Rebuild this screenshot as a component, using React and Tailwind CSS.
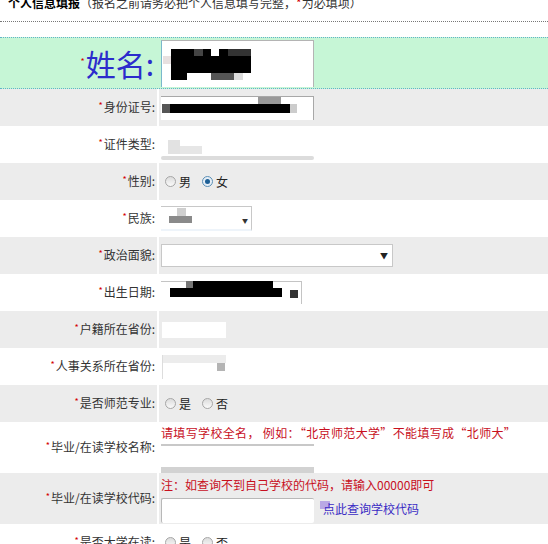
import React from 'react';

const FONT = { fontFamily: '"Noto Sans CJK SC", "Liberation Sans", sans-serif' };

const Star = () => <span className="relative -top-[3px] mr-[1px] text-[9px] text-[#d40000]">*</span>;

const Label = ({ children }) => (
  <span className="text-[12px] leading-[14px] text-[#333]">
    <Star />
    {children}:
  </span>
);

const Radio = ({ checked }) =>
  checked ? (
    <span className="flex h-[11px] w-[11px] items-center justify-center rounded-full border border-[#5b8fb5] bg-[#e6eef6]">
      <span className="h-[5px] w-[5px] rounded-full bg-[#1d5f96]" />
    </span>
  ) : (
    <span className="h-[11px] w-[11px] rounded-full border border-[#a6a6a6] bg-gradient-to-b from-[#dcdcdc] to-[#fafafa]" />
  );

const RadioPair = ({ a, b, checked }) => (
  <div className="flex items-center pl-[6px] text-[12px] text-[#222]">
    <Radio checked={checked === 'a'} />
    <span className="ml-[3px] mr-[11px]">{a}</span>
    <Radio checked={checked === 'b'} />
    <span className="ml-[3px]">{b}</span>
  </div>
);

// one table row: label cell + content cell, 2px white spacing between
const Row = ({ label, grey, tall, children }) => (
  <div className={`flex gap-[2px] ${tall ? 'h-[51px]' : 'h-[37px]'}`}>
    <div className={`flex w-[157px] shrink-0 items-center justify-end pr-[2px] ${grey ? 'bg-[#ececec]' : 'bg-white'}`}>
      <Label>{label}</Label>
    </div>
    <div className={`flex flex-1 items-center ${grey ? 'bg-[#ececec]' : 'bg-white'}`}>{children}</div>
  </div>
);

const Blk = ({ className }) => <span className={`absolute ${className}`} />;

export default function App() {
  return (
    <div className="w-[548px] overflow-hidden bg-white" style={FONT}>
      <div className="-mt-[4px] h-[25px] pl-[8px] text-[12px] leading-[14px] text-[#333]">
        <b className="text-black">个人信息填报</b>（报名之前请务必把个人信息填写完整，<span className="text-[#d40000]">*</span>为必填项）
      </div>
      <div className="border-t border-dotted border-[#777]" />
      <div className="h-[15px]" />

      {/* 姓名 */}
      <div className="flex h-[52px] border-y border-dotted border-[#62b4c8] bg-[#c6f6d6]">
        <div className="flex w-[159px] shrink-0 items-center justify-end pr-[5px]">
          <span className="relative -top-[1px] mr-[1px] text-[9px] text-[#d40000]">*</span>
          <span className="text-[30px] leading-[34px] text-[#2c2ccc]">姓名:</span>
        </div>
        <div className="flex flex-1 items-center">
          <div className="relative ml-[2px] h-[47px] w-[153px] border-t border-r border-[#b4b4b4] border-l border-l-[#7ab8cc] border-l-dotted bg-white">
            <Blk className="left-[9px] top-[8px] h-[7px] w-[23px] bg-black" />
            <Blk className="left-[32px] top-[8px] h-[7px] w-[9px] bg-[#444]" />
            <Blk className="left-[41px] top-[8px] h-[7px] w-[8px] bg-black" />
            <Blk className="left-[57px] top-[8px] h-[7px] w-[9px] bg-black" />
            <Blk className="left-[66px] top-[8px] h-[7px] w-[23px] bg-[#333]" />
            <Blk className="left-[9px] top-[15px] h-[17px] w-[80px] bg-black" />
            <Blk className="left-[1px] top-[15px] h-[8px] w-[8px] bg-[#e8e0e0]" />
            <Blk className="left-[9px] top-[32px] h-[7px] w-[16px] bg-black" />
            <Blk className="left-[49px] top-[32px] h-[7px] w-[23px] bg-[#555]" />
            <Blk className="left-[72px] top-[32px] h-[7px] w-[9px] bg-[#ddd]" />
          </div>
        </div>
      </div>

      <Row label="身份证号" grey>
        <div className="relative ml-[2px] h-[24px] w-[153px] border-t border-r border-[#a8a8a8] bg-white">
          <Blk className="left-[1px] top-[7px] h-[9px] w-[8px] bg-[#555]" />
          <Blk className="left-[9px] top-[7px] h-[9px] w-[120px] bg-black" />
          <Blk className="left-[129px] top-[7px] h-[9px] w-[7px] bg-[#ccc]" />
          <Blk className="left-[97px] top-0 h-[7px] w-[23px] bg-[#999]" />
        </div>
      </Row>

      <Row label="证件类型">
        <div className="relative ml-[2px] h-[30px] w-[153px]">
          <Blk className="left-[7px] top-[10px] h-[14px] w-[12px] bg-[#e2e2e2]" />
          <Blk className="left-[19px] top-[16px] h-[8px] w-[22px] bg-[#e6e6e6]" />
          <Blk className="left-0 top-[26px] h-[4px] w-[153px] rounded-full bg-[#dcdcdc]" />
        </div>
      </Row>

      <Row label="性别" grey>
        <RadioPair a="男" b="女" checked="b" />
      </Row>

      <Row label="民族">
        <div className="relative ml-[2px] h-[25px] w-[91px] border-r border-t border-[#c8c8c8] border-b-[2px] border-b-[#eef4fa] bg-white">
          <Blk className="left-[8px] top-[9px] h-[7px] w-[23px] bg-[#8a8a8a]" />
          <Blk className="left-[16px] top-[1px] h-[8px] w-[9px] bg-[#cfcfcf]" />
          <span className="absolute right-[3px] top-[11px] text-[6px] leading-[6px] text-[#333]">▼</span>
        </div>
      </Row>

      <Row label="政治面貌" grey>
        <div className="relative ml-[2px] h-[23px] w-[232px] border border-[#c8c8c8] bg-white">
          <span className="absolute right-[4px] top-[7px] text-[8px] leading-[8px] text-[#222]">▼</span>
        </div>
      </Row>

      <Row label="出生日期">
        <div className="relative ml-[2px] h-[23px] w-[141px] border-t border-r border-[#c4c4c4] bg-white">
          <Blk className="left-[32px] top-[-1px] h-[7px] w-[80px] bg-black" />
          <Blk className="left-[25px] top-[-1px] h-[7px] w-[7px] bg-[#777]" />
          <Blk className="left-[9px] top-[6px] h-[9px] w-[112px] bg-black" />
          <Blk className="left-[129px] top-[8px] h-[8px] w-[8px] bg-[#333]" />
        </div>
      </Row>

      <Row label="户籍所在省份" grey>
        <div className="ml-[3px] h-[16px] w-[64px] bg-white" />
      </Row>

      <Row label="人事关系所在省份">
        <div className="relative ml-[3px] h-[24px] w-[63px] border-l border-[#ddd] bg-white">
          <Blk className="left-0 top-0 h-[8px] w-[63px] bg-[#ececec]" />
          <Blk className="right-0 top-[8px] h-[8px] w-[8px] bg-[#b4b4b4]" />
        </div>
      </Row>

      <Row label="是否师范专业" grey>
        <RadioPair a="是" b="否" />
      </Row>

      <Row label="毕业/在读学校名称" tall>
        <div className="flex h-full flex-col pl-[2px] pt-[4px]">
          <span className="text-[12px] leading-[14px] tracking-[0.35px] text-[#c8101e]">请填写学校全名， 例如：“北京师范大学”不能填写成“北师大”</span>
          <div className="mt-[4px] h-[27px] w-[153px] border-t-[2px] border-[#c8c8c8] bg-white" />
          <div className="h-[7px] w-[153px] bg-[#d2d2d2]" />
        </div>
      </Row>

      <Row label="毕业/在读学校代码" grey tall>
        <div className="flex h-full flex-col pl-[2px] pt-[5px]">
          <span className="text-[12px] leading-[14px] text-[#c8101e]">注：如查询不到自己学校的代码，请输入00000即可</span>
          <div className="mt-[3px] flex items-end">
            <div className="h-[25px] w-[153px] rounded-[2px] border-t border-l border-[#b8b8b8] bg-white" />
            <div className="relative ml-[9px] mb-[4px]">
              <Blk className="-left-[3px] top-[6px] h-[8px] w-[10px] bg-[#b9a8e4]" />
              <span className="relative text-[12px] leading-[14px] text-[#3a2bc4]">点此查询学校代码</span>
            </div>
          </div>
        </div>
      </Row>

      <Row label="是否大学在读">
        <RadioPair a="是" b="否" />
      </Row>
    </div>
  );
}
